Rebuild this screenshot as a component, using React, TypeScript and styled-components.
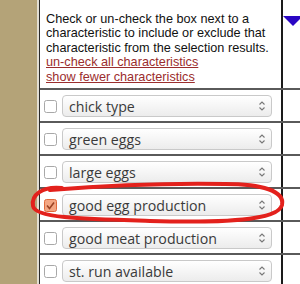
import React from 'react';
import styled, { createGlobalStyle } from 'styled-components';

const GlobalStyle = createGlobalStyle`
  html, body {
    margin: 0;
    padding: 0;
    background: #ffffff;
  }
  body {
    width: 300px;
    height: 284px;
    overflow: hidden;
  }
`;

const Page = styled.div`
  position: relative;
  display: flex;
  width: 300px;
  height: 284px;
  overflow: hidden;
`;

const Sidebar = styled.div`
  width: 37px;
  flex: none;
  background: #b4a378;
  border-right: 2px solid #e2ded2;
`;

const Table = styled.div`
  flex: 1;
  display: flex;
  flex-direction: column;
  border-left: 1px solid #2a2a2a;
`;

const Row = styled.div<{ $first?: boolean }>`
  display: grid;
  grid-template-columns: 241px 2px 1fr;
  border-top: ${(p) => (p.$first ? 'none' : '2px solid #5a5a5a')};
  height: ${(p) => (p.$first ? '88px' : '31px')};
  flex: none;
`;

const Divider = styled.div`
  background: #1a1a1a;
`;

const InfoCell = styled.div`
  padding: 12px 0 0 6px;
  font-family: 'Liberation Sans', Arial, sans-serif;
  font-size: 12.7px;
  line-height: 14.4px;
  color: #111111;
`;

const LinkText = styled.a`
  display: block;
  color: #9b2d2d;
  text-decoration: underline;
`;

const SideCell = styled.div`
  padding: 12px 0 0 0;
  overflow: hidden;
`;

const ItemCell = styled.div`
  display: flex;
  align-items: flex-start;
  padding: 5px 0 0 4px;
  gap: 5px;
`;

const Check = styled.span`
  display: block;
  width: 13px;
  height: 13px;
  margin-top: 4px;
  flex: none;
`;

const SelectBox = styled.div`
  box-sizing: border-box;
  width: 210px;
  height: 22px;
  display: flex;
  align-items: center;
  justify-content: space-between;
  padding: 0 5px 0 6px;
  border: 1px solid #c9c9c9;
  border-radius: 4px;
  background: linear-gradient(#ffffff, #ececec);
  font-family: 'Open Sans', 'DejaVu Sans', sans-serif;
  font-size: 14.2px;
  color: #3a3a3a;
  white-space: nowrap;
`;

const Ring = styled.svg`
  position: absolute;
  left: 0;
  top: 0;
  pointer-events: none;
`;

const items = [
  { label: 'chick type', checked: false },
  { label: 'green eggs', checked: false },
  { label: 'large eggs', checked: false },
  { label: 'good egg production', checked: true },
  { label: 'good meat production', checked: false },
  { label: 'st. run available', checked: false },
];

function CheckIcon({ checked }: { checked: boolean }) {
  return (
    <Check>
      <svg width="13" height="13" viewBox="0 0 13 13">
        <rect
          x="0.5"
          y="0.5"
          width="12"
          height="12"
          rx="2"
          fill={checked ? '#f3a683' : '#ffffff'}
          stroke={checked ? '#e06a3c' : '#a8a8a8'}
        />
        {checked && (
          <path d="M3 6.5 L5.5 9.5 L10 3.5" fill="none" stroke="#9a4324" strokeWidth="1.6" />
        )}
      </svg>
    </Check>
  );
}

function Arrows() {
  return (
    <svg width="8" height="12" viewBox="0 0 8 12">
      <path d="M1.5 4.5 L4 2 L6.5 4.5" fill="none" stroke="#777" strokeWidth="1.1" />
      <path d="M1.5 7.5 L4 10 L6.5 7.5" fill="none" stroke="#777" strokeWidth="1.1" />
    </svg>
  );
}

export default function App() {
  return (
    <Page>
      <GlobalStyle />
      <Sidebar />
      <Table>
        <Row $first>
          <InfoCell>
            Check or un-check the box next to a characteristic to include or exclude that
            characteristic from the selection results.
            <LinkText>un-check all characteristics</LinkText>
            <LinkText>show fewer characteristics</LinkText>
          </InfoCell>
          <Divider />
          <SideCell>
            <svg width="20" height="10" viewBox="0 0 20 10">
              <path d="M0 0 L20 0 L10 10 Z" fill="#2a06c4" />
            </svg>
          </SideCell>
        </Row>
        {items.map((it) => (
          <Row key={it.label}>
            <ItemCell>
              <CheckIcon checked={it.checked} />
              <SelectBox>
                <span>{it.label}</span>
                <Arrows />
              </SelectBox>
            </ItemCell>
            <Divider />
            <div />
          </Row>
        ))}
      </Table>
      <Ring width="300" height="284" viewBox="0 0 300 284">
        <path
          d="M62 188 C42 186 31 195 33 206 C35 218 80 219 150 221 C220 223 278 221 282 205 C285 191 262 184 225 184 C170 183 100 186 50 190"
          fill="none"
          stroke="#e3211c"
          strokeWidth="4"
          strokeLinecap="round"
        />
      </Ring>
    </Page>
  );
}
